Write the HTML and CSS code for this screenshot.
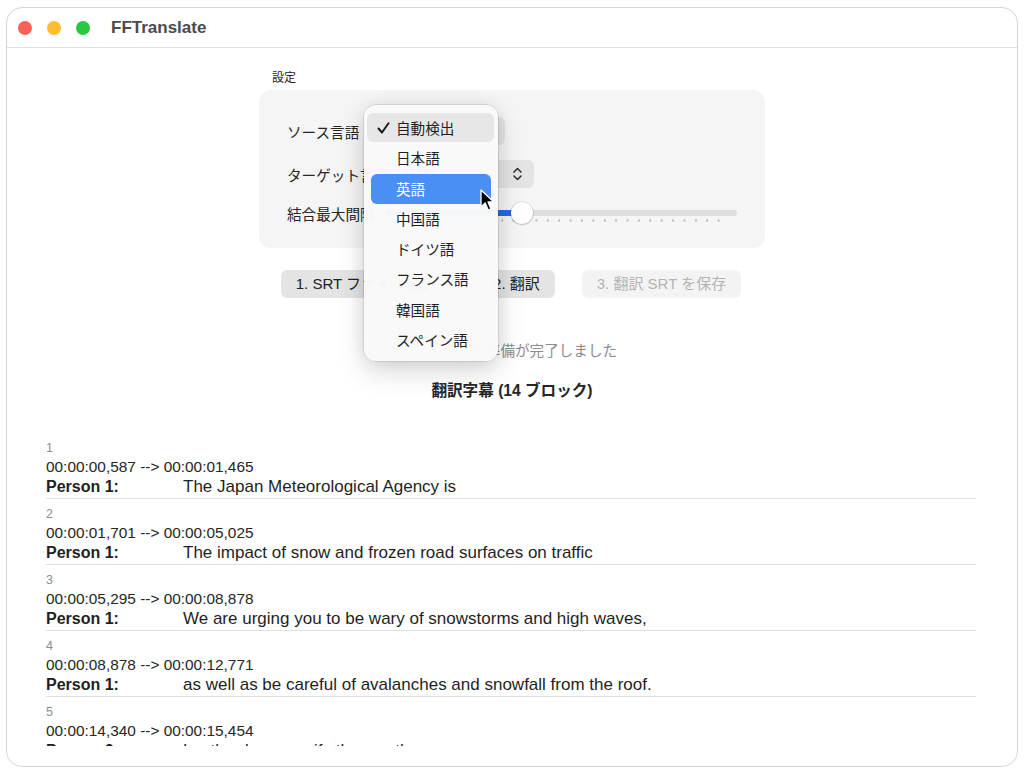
FILE: index.html
```html
<!DOCTYPE html>
<html lang="ja">
<head>
<meta charset="utf-8">
<title>FFTranslate</title>
<link rel="stylesheet" href="styles.css">
</head>
<body>
<div class="window">
  <div class="titlebar">
    <span class="light red"></span>
    <span class="light yellow"></span>
    <span class="light green"></span>
    <span class="title">FFTranslate</span>
  </div>
  <div class="content">
    <div class="settings">
      <div class="section-label">設定</div>
      <div class="group">
        <div class="row r1">
          <span class="label">ソース言語</span>
          <div class="popup src"><span>自動検出</span>
            <svg class="chev" width="9" height="14" viewBox="0 0 9 14"><path d="M1 5 L4.5 1.5 L8 5 M1 9 L4.5 12.5 L8 9" fill="none" stroke="#333" stroke-width="1.6" stroke-linecap="round" stroke-linejoin="round"/></svg>
          </div>
        </div>
        <div class="row r2">
          <span class="label">ターゲット言語</span>
          <div class="popup tgt"><span>英語</span>
            <svg class="chev" width="9" height="14" viewBox="0 0 9 14"><path d="M1 5 L4.5 1.5 L8 5 M1 9 L4.5 12.5 L8 9" fill="none" stroke="#333" stroke-width="1.6" stroke-linecap="round" stroke-linejoin="round"/></svg>
          </div>
        </div>
        <div class="row r3">
          <span class="label">結合最大間隔</span>
          <div class="slider">
            <div class="track"><div class="fill"></div></div>
            <div class="ticks"></div>
            <div class="thumb"></div>
          </div>
        </div>
      </div>
    </div>
    <div class="buttons">
      <div class="btn b1">1. SRT ファイル選択</div>
      <div class="btn b2">2. 翻訳</div>
      <div class="btn b3 disabled">3. 翻訳 SRT を保存</div>
    </div>
    <div class="status">ファイルの準備が完了しました</div>
    <div class="heading">翻訳字幕 (14 ブロック)</div>
    <div class="list">
      <div class="item">
        <div class="num">1</div>
        <div class="time">00:00:00,587 --&gt; 00:00:01,465</div>
        <div class="line"><span class="who">Person 1:</span><span class="text">The Japan Meteorological Agency is</span></div>
      </div>
      <div class="item">
        <div class="num">2</div>
        <div class="time">00:00:01,701 --&gt; 00:00:05,025</div>
        <div class="line"><span class="who">Person 1:</span><span class="text">The impact of snow and frozen road surfaces on traffic</span></div>
      </div>
      <div class="item">
        <div class="num">3</div>
        <div class="time">00:00:05,295 --&gt; 00:00:08,878</div>
        <div class="line"><span class="who">Person 1:</span><span class="text">We are urging you to be wary of snowstorms and high waves,</span></div>
      </div>
      <div class="item">
        <div class="num">4</div>
        <div class="time">00:00:08,878 --&gt; 00:00:12,771</div>
        <div class="line"><span class="who">Person 1:</span><span class="text">as well as be careful of avalanches and snowfall from the roof.</span></div>
      </div>
      <div class="item">
        <div class="num">5</div>
        <div class="time">00:00:14,340 --&gt; 00:00:15,454</div>
        <div class="line"><span class="who">Person 2:</span><span class="text">Lastly, please verify the weather</span></div>
      </div>
    </div>
  </div>

  <div class="menu">
    <div class="mi checked">
      <svg class="check" width="13" height="12" viewBox="0 0 13 12"><path d="M1.5 6.5 L5 10.5 L11.5 1.2" fill="none" stroke="#1d1d1d" stroke-width="2" stroke-linecap="round" stroke-linejoin="round"/></svg>
      自動検出</div>
    <div class="mi">日本語</div>
    <div class="mi active">英語</div>
    <div class="mi">中国語</div>
    <div class="mi">ドイツ語</div>
    <div class="mi">フランス語</div>
    <div class="mi">韓国語</div>
    <div class="mi">スペイン語</div>
  </div>

  <svg class="cursor" width="16" height="24" viewBox="0 0 16 24">
    <path d="M1 1 L1 18 L5.2 14 L8.2 21 L11 19.8 L8 13 L13.8 13 Z" fill="#000" stroke="#fff" stroke-width="1.3" stroke-linejoin="round"/>
  </svg>
</div>
</body>
</html>
```

FILE: styles.css
```css
* { box-sizing: border-box; }

html, body {
  margin: 0;
  padding: 0;
  background: #ffffff;
}

body {
  font-family: "Liberation Sans", "Noto Sans CJK JP", sans-serif;
  color: #1f1f1f;
}

.window {
  position: relative;
  margin: 7px 0 0 6px;
  width: 1012px;
  height: 760px;
  border: 1px solid #d6d6d6;
  border-radius: 16px;
  background: #ffffff;
  overflow: hidden;
  display: flex;
  flex-direction: column;
}

.titlebar {
  height: 40px;
  flex: none;
  border-bottom: 1px solid #e2e2e2;
  display: flex;
  align-items: center;
  padding-left: 11px;
}

.light {
  width: 14px;
  height: 14px;
  border-radius: 50%;
  margin-right: 15px;
}
.light.red { background: #fe5f57; }
.light.yellow { background: #febc2e; }
.light.green { background: #28c840; margin-right: 21px; }

.title {
  font-weight: bold;
  font-size: 17px;
  color: #4b4b4b;
}

.content {
  flex: 1;
  display: flex;
  flex-direction: column;
  align-items: center;
  padding-top: 21px;
  min-height: 0;
}

.settings {
  width: 506px;
}

.section-label {
  font-family: "Noto Sans CJK JP", sans-serif;
  font-size: 12px;
  line-height: 16px;
  padding-left: 13px;
  color: #262626;
}

.group {
  margin-top: 5px;
  background: #f5f5f5;
  border-radius: 12px;
  padding: 27px 27px 21px 28px;
}

.row {
  display: flex;
  align-items: center;
  height: 28px;
}
.r2 { margin-top: 15px; }
.r3 { margin-top: 11px; }

.label {
  flex: none;
  white-space: nowrap;
  font-family: "Noto Sans CJK JP", sans-serif;
  font-size: 14.6px;
  color: #262626;
}

.popup {
  flex: none;
  height: 28px;
  border-radius: 6px;
  background: #e4e4e4;
  display: flex;
  align-items: center;
  justify-content: space-between;
  padding: 0 12px 0 10px;
  font-family: "Noto Sans CJK JP", sans-serif;
  font-size: 14.5px;
}
.popup.src { width: 140px; margin-left: 6px; }
.popup.tgt { width: 142px; margin-left: 3px; }
.chev { display: block; }

.slider {
  flex: none;
  position: relative;
  margin-left: 10px;
  width: 352px;
  height: 28px;
}
.track {
  position: absolute;
  left: 0;
  right: 0;
  top: 11px;
  height: 6px;
  border-radius: 3px;
  background: #dedede;
}
.fill {
  width: 130px;
  height: 100%;
  border-radius: 3px;
  background: #1f6fe3;
}
.ticks {
  position: absolute;
  left: 9px;
  width: 332px;
  top: 20px;
  height: 3px;
  background-image: radial-gradient(circle, #b3b3b3 0.9px, transparent 1.3px);
  background-size: 11.4px 3px;
}
.thumb {
  position: absolute;
  left: 126px;
  top: 3px;
  width: 22px;
  height: 22px;
  border-radius: 50%;
  background: #ffffff;
  box-shadow: 0 0.5px 2px rgba(0,0,0,0.3), 0 0 0 0.5px rgba(0,0,0,0.08);
}

.buttons {
  margin-top: 22px;
  display: flex;
  gap: 27px;
  padding-right: 2px;
}
.btn {
  height: 28px;
  line-height: 28px;
  padding: 0 15px;
  border-radius: 6px;
  background: #e4e4e4;
  font-size: 15px;
  color: #222;
}
.btn.disabled {
  background: #f3f3f3;
  color: #b3b3b3;
}

.status {
  margin-top: 42px;
  font-family: "Noto Sans CJK JP", sans-serif;
  font-size: 14.6px;
  line-height: 20px;
  color: #8c8c8c;
  padding-left: 6px;
}

.heading {
  margin-top: 21px;
  font-size: 15.6px;
  line-height: 20px;
  font-weight: bold;
  color: #262626;
}

.list {
  margin-top: 32px;
  align-self: flex-start;
  margin-left: 39px;
  width: 930px;
  flex: 1;
  min-height: 0;
  overflow: hidden;
  margin-bottom: 20px;
}

.item {
  padding: 5px 0 3px;
  border-bottom: 1.5px solid #e0e0e0;
}
.num {
  font-size: 12.5px;
  line-height: 18px;
  color: #8e8e8e;
  padding-top: 1px;
  margin-bottom: -1px;
}
.time {
  font-size: 15.4px;
  line-height: 19px;
  color: #262626;
  padding-top: 1px;
}
.line {
  display: flex;
  font-size: 16px;
  line-height: 20px;
  color: #1f1f1f;
  padding-top: 1px;
  margin-bottom: -2px;
}
.who {
  width: 137px;
  font-weight: bold;
}
.text { font-size: 17px; }

.menu {
  position: absolute;
  left: 357px;
  top: 97px;
  width: 134px;
  height: 256px;
  padding: 8px 7px 6px;
  border-radius: 12px;
  background: rgba(249, 249, 249, 0.98);
  box-shadow: 0 0 0 0.5px rgba(0,0,0,0.18), 0 10px 28px rgba(0,0,0,0.16), 0 0 16px rgba(0,0,0,0.07);
}
.mi {
  position: relative;
  height: 30.3px;
  line-height: 30.3px;
  padding-left: 25px;
  border-radius: 6px;
  font-family: "Noto Sans CJK JP", sans-serif;
  font-size: 14.6px;
  color: #1f1f1f;
}
.mi.checked {
  background: #e7e7e7;
  margin: 0 -3px 0 -4px;
  padding-left: 29px;
  height: 29px;
  margin-bottom: 1.3px;
  line-height: 29px;
}
.check {
  position: absolute;
  left: 10px;
  top: 9px;
}
.mi.active {
  background: #4a8ff4;
  color: #ffffff;
}

.cursor {
  position: absolute;
  left: 473px;
  top: 181px;
}
```
